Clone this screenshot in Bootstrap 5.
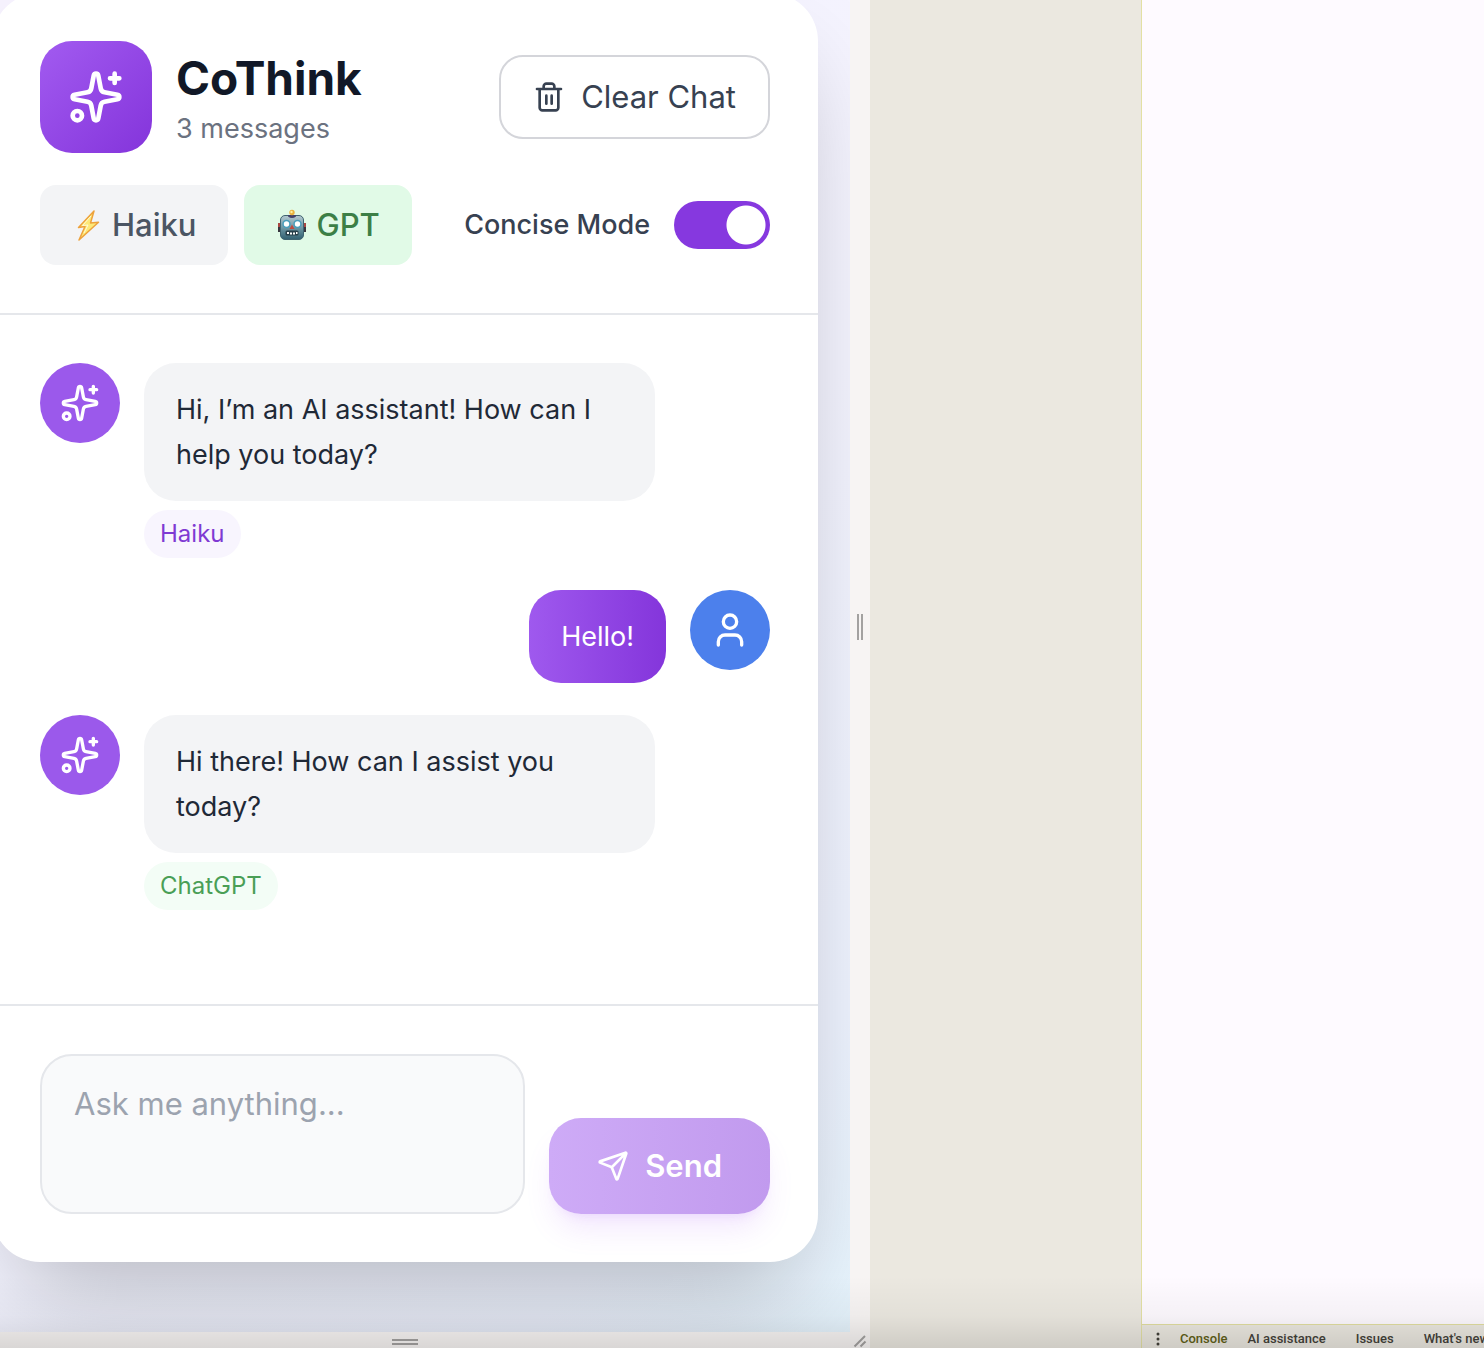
<!DOCTYPE html>
<html lang="en">
<head>
<meta charset="utf-8">
<meta name="viewport" content="width=device-width, initial-scale=1">
<title>CoThink</title>
<link href="https://cdn.jsdelivr.net/npm/bootstrap@5.3.0/dist/css/bootstrap.min.css" rel="stylesheet">
<style>
  body { font-family: Inter, "Liberation Sans", sans-serif; background: #ebe8e0; color: #1f2937; }
  svg { flex: none; }
  .line-icon { fill: none; stroke: currentColor; stroke-width: 2; stroke-linecap: round; stroke-linejoin: round; }

  /* Device frame and its drag handles */
  .device-pane { flex: 0 0 870px; }
  .viewport-area { background: linear-gradient(135deg, #f7f3ff 0%, #f4f4ff 55%, #eef3ff 85%, #e6f4fd 100%); }
  .grip-side, .grip-bottom { background: #f7f4f3; }
  .grip-side { flex: 0 0 20px; padding-bottom: 78px; }
  .grip-bottom { height: 16px; padding-right: 40px; padding-top: 4px; }
  .grip-corner { width: 20px; background: #f7f4f3; }
  .bars-v { width: 6px; height: 26px; border: solid #a3a1a0; border-width: 0 2px; }
  .bars-h { width: 26px; height: 6px; border: solid #a3a1a0; border-width: 2px 0; }

  /* Chat card */
  .chat-card { margin: -7px 32px 70px -8px; border-radius: 48px; background: #fff; box-shadow: 0 50px 100px -24px rgba(0, 0, 0, .25); }
  .chat-head { padding: 48px; border-bottom: 2px solid #e5e7eb; gap: 32px; }
  .chat-log { padding: 48px; gap: 32px; }
  .chat-foot { padding: 48px; border-top: 2px solid #e5e7eb; gap: 24px; }
  .logo-tile { width: 112px; height: 112px; border-radius: 32px; background: linear-gradient(135deg, #a25bf0, #8434db); color: #fff; }
  .app-title { font-size: 46px; line-height: 64px; font-weight: 700; color: #111827; }
  .app-sub { font-size: 27px; line-height: 38px; color: #6b7280; }
  .btn-clear { height: 84px; padding: 0 32px; gap: 16px; border: 2px solid #d4d5da; border-radius: 24px; font-size: 31px; color: #374151; background: #fff; }
  .btn-model { height: 80px; padding: 0 32px; gap: 8px; border: 0; border-radius: 16px; font-size: 31px; font-weight: 500; background: #f3f4f6; color: #4b5563; }
  .btn-model.chosen { background: #e1fae7; color: #3c7f46; }
  .mode-label { font-size: 27px; font-weight: 500; color: #374151; }
  .form-check-input.mode-switch { width: 96px; height: 48px; margin: 0; border: 0; border-radius: 24px; background: #8638df radial-gradient(circle at 72px 24px, #fff 19px, transparent 20px); }
  .avatar-dot { width: 80px; height: 80px; background: #9b59eb; color: #fff; flex: none; }
  .avatar-user { background: #4c80ec; }
  .msg-body { max-width: 70%; gap: 9px; }
  .bubble { padding: 24px 32px; border-radius: 32px; background: #f3f4f6; font-size: 27px; line-height: 45px; }
  .bubble-user { background: linear-gradient(90deg, #9f59ee, #8435db); color: #fff; }
  .model-tag { height: 48px; padding: 0 16px; font-size: 24px; background: #f8f5fe; color: #7f3ad3; }
  .model-tag-gpt { background: #f3fdf6; color: #4a9f56; }
  .form-control.ask-box { height: 160px; padding: 24px 32px; border: 2px solid #e5e7eb; border-radius: 32px; background: #f9fafb; font-size: 31px; line-height: 48px; resize: none; }
  .ask-box::placeholder { color: #9ca3af; }
  .btn-send { height: 96px; padding: 0 48px; gap: 16px; border: 0; border-radius: 32px; font-size: 31px; font-weight: 600; color: #fff; background: linear-gradient(90deg, #ceabf7, #c19aee); box-shadow: 0 20px 30px -6px rgba(168, 85, 247, .14), 0 8px 12px -8px rgba(168, 85, 247, .16); }
  .btn-send:hover { color: #fff; }

  /* Developer tools drawer */
  .tools-pane { flex: 0 0 343px; border-left: 1px solid #e3e0a4; background: #fefaff; }
  .drawer-bar { height: 24px; border-top: 1px solid #e1dea0; background: #ebe8e0; font-family: Roboto, sans-serif; font-size: 13px; font-weight: 500; padding: 4px 0 0 14px; gap: 30px; }
  .drawer-bar a { color: #44423a; text-decoration: none; white-space: nowrap; }
  .drawer-bar a.current { color: #5f6017; }
  .drawer-lead { gap: 20px; }
  .tab-menu { border: 0; background: none; padding: 0; width: 4px; color: #44423a; }
  .edge-shade { position: absolute; left: 0; right: 0; bottom: 0; height: 72px; pointer-events: none; background: linear-gradient(rgba(0, 0, 0, 0), rgba(0, 0, 0, .035) 55%, rgba(0, 0, 0, .12)); }
</style>
</head>
<body>
<svg class="d-none" aria-hidden="true">
  <symbol id="sparkles" viewBox="0 0 24 24">
    <path d="M11.017 2.814a1 1 0 0 1 1.966 0l1.051 5.558a2 2 0 0 0 1.594 1.594l5.558 1.051a1 1 0 0 1 0 1.966l-5.558 1.051a2 2 0 0 0-1.594 1.594l-1.051 5.558a1 1 0 0 1-1.966 0l-1.051-5.558a2 2 0 0 0-1.594-1.594l-5.558-1.051a1 1 0 0 1 0-1.966l5.558-1.051a2 2 0 0 0 1.594-1.594zM20 2v4M22 4h-4"/>
    <circle cx="4" cy="20" r="2"/>
  </symbol>
</svg>
<div class="d-flex vh-100 overflow-hidden position-relative">
  <div class="device-pane d-flex flex-column overflow-hidden">
    <div class="d-flex flex-grow-1 overflow-hidden">
      <main class="viewport-area d-flex flex-column flex-grow-1 overflow-hidden">
        <div class="chat-card d-flex flex-column flex-grow-1">
          <header class="chat-head d-flex flex-column">
            <div class="d-flex align-items-center justify-content-between">
              <div class="d-flex align-items-center gap-4">
                <div class="logo-tile d-flex align-items-center justify-content-center">
                  <svg class="line-icon" width="56" height="56"><use href="#sparkles"/></svg>
                </div>
                <div>
                  <h1 class="app-title m-0">CoThink</h1>
                  <p class="app-sub m-0">3 messages</p>
                </div>
              </div>
              <button type="button" class="btn btn-clear d-flex align-items-center">
                <svg class="line-icon" width="32" height="32" viewBox="0 0 24 24"><path d="M3 6h18M19 6v14c0 1-1 2-2 2H7c-1 0-2-1-2-2V6M8 6V4c0-1 1-2 2-2h4c1 0 2 1 2 2v2M10 11v6M14 11v6"/></svg>
                Clear Chat
              </button>
            </div>
            <div class="d-flex align-items-center justify-content-between">
              <div class="d-flex gap-3">
                <button type="button" class="btn btn-model d-flex align-items-center">
                  <svg width="32" height="32" viewBox="0 0 32 32"><path d="M22 2 6.500 18.500 13 17.500 7 31 26.500 13.200 18.500 14Z" fill="#fde978" stroke="#eda23c" stroke-width="1.500" stroke-linejoin="round"/><path d="M19 7 10.500 16.500 16 16 12 24" fill="none" stroke="#fffbd8" stroke-width="1"/></svg>
                  Haiku
                </button>
                <button type="button" class="btn btn-model chosen d-flex align-items-center">
                  <svg width="32" height="32" viewBox="0 0 32 32">
                    <defs><linearGradient id="steel" x2="0" y2="1"><stop offset="0" stop-color="#b5c9d1"/><stop offset=".5" stop-color="#6f98a5"/><stop offset="1" stop-color="#315f70"/></linearGradient></defs>
                    <path d="M2 14h3v9H2zM27 14h3v9h-3z" fill="#a94742"/><path d="M2 18h3v5H2zM27 18h3v5h-3z" fill="#36363f"/>
                    <rect x="4.500" y="6.500" width="23" height="24" rx="4.500" fill="url(#steel)" stroke="#3f6370"/>
                    <path d="M12 6h8v1.500q-4 3-8 0z" fill="#44426a"/><circle cx="16" cy="3.500" r="2.700" fill="#eab13e"/><circle cx="15.500" cy="3" r="1.200" fill="#fff0a1"/>
                    <circle cx="10.500" cy="15" r="4.200" fill="#489dbb"/><circle cx="21.500" cy="15" r="4.200" fill="#489dbb"/>
                    <circle cx="10.500" cy="15" r="2.700" fill="#fff"/><circle cx="21.500" cy="15" r="2.700" fill="#fff"/>
                    <path d="M16 15.500l2.500 4.500h-5z" fill="#c1493f"/><rect x="9.500" y="21.500" width="13" height="5" rx="1.500" fill="#263e49"/>
                    <path d="M11 23h2v2h-2zM14 23.500h2v2h-2zM17 23.500h2v2h-2zM20 23h1.500v2H20z" fill="#fff"/>
                  </svg>
                  GPT
                </button>
              </div>
              <div class="d-flex align-items-center gap-4">
                <label class="mode-label" for="concise">Concise Mode</label>
                <input class="form-check-input mode-switch" type="checkbox" role="switch" id="concise" checked>
              </div>
            </div>
          </header>

          <section class="chat-log d-flex flex-column flex-grow-1">
            <article class="d-flex gap-4">
              <div class="avatar-dot rounded-circle d-flex align-items-center justify-content-center"><svg class="line-icon" width="40" height="40"><use href="#sparkles"/></svg></div>
              <div class="msg-body d-flex flex-column align-items-start">
                <div class="bubble">Hi, I’m an AI assistant! How can I help you today?</div>
                <span class="model-tag rounded-pill d-flex align-items-center">Haiku</span>
              </div>
            </article>
            <article class="d-flex gap-4 justify-content-end">
              <div class="msg-body"><div class="bubble bubble-user">Hello!</div></div>
              <div class="avatar-dot avatar-user rounded-circle d-flex align-items-center justify-content-center"><svg class="line-icon" width="40" height="40" viewBox="0 0 24 24"><path d="M19 21v-2a4 4 0 0 0-4-4H9a4 4 0 0 0-4 4v2"/><circle cx="12" cy="7" r="4"/></svg></div>
            </article>
            <article class="d-flex gap-4">
              <div class="avatar-dot rounded-circle d-flex align-items-center justify-content-center"><svg class="line-icon" width="40" height="40"><use href="#sparkles"/></svg></div>
              <div class="msg-body d-flex flex-column align-items-start">
                <div class="bubble">Hi there! How can I assist you today?</div>
                <span class="model-tag model-tag-gpt rounded-pill d-flex align-items-center">ChatGPT</span>
              </div>
            </article>
          </section>

          <form class="chat-foot d-flex align-items-end">
            <textarea class="form-control ask-box" aria-label="Message" placeholder="Ask me anything..."></textarea>
            <button type="button" class="btn btn-send d-flex align-items-center">
              <svg class="line-icon" width="32" height="32" viewBox="0 0 24 24"><path d="M14.536 21.686a.5.5 0 0 0 .937-.024l6.500-19a.496.496 0 0 0-.635-.635l-19 6.500a.5.5 0 0 0-.024.937l7.930 3.180a2 2 0 0 1 1.112 1.110zM21.854 2.147l-10.940 10.939"/></svg>
              Send
            </button>
          </form>
        </div>
      </main>
      <div class="grip-side d-flex align-items-center justify-content-center"><div class="bars-v"></div></div>
    </div>
    <div class="d-flex">
      <div class="grip-bottom flex-grow-1 d-flex align-items-center justify-content-center"><div class="bars-h"></div></div>
      <div class="grip-corner"><svg class="d-block" width="20" height="16" viewBox="0 0 20 16"><path d="M4.500 14.500 15 4M10.500 14.500l5-5" stroke="#a3a1a0" stroke-width="2"/></svg></div>
    </div>
  </div>
  <div class="flex-grow-1"></div>
  <aside class="tools-pane d-flex flex-column justify-content-end overflow-hidden">
    <nav class="drawer-bar d-flex align-items-center">
      <div class="drawer-lead d-flex align-items-center">
        <button type="button" class="tab-menu d-flex" aria-label="More tools"><svg width="4" height="14" viewBox="0 0 4 14" fill="currentColor"><circle cx="2" cy="2" r="1.500"/><circle cx="2" cy="7" r="1.500"/><circle cx="2" cy="12" r="1.500"/></svg></button>
        <a class="current" href="#">Console</a>
        <a href="#">AI assistance</a>
      </div>
      <a href="#">Issues</a>
      <a href="#">What's new</a>
    </nav>
  </aside>
  <div class="edge-shade"></div>
</div>
<script src="https://cdn.jsdelivr.net/npm/bootstrap@5.3.0/dist/js/bootstrap.bundle.min.js"></script>
</body>
</html>
